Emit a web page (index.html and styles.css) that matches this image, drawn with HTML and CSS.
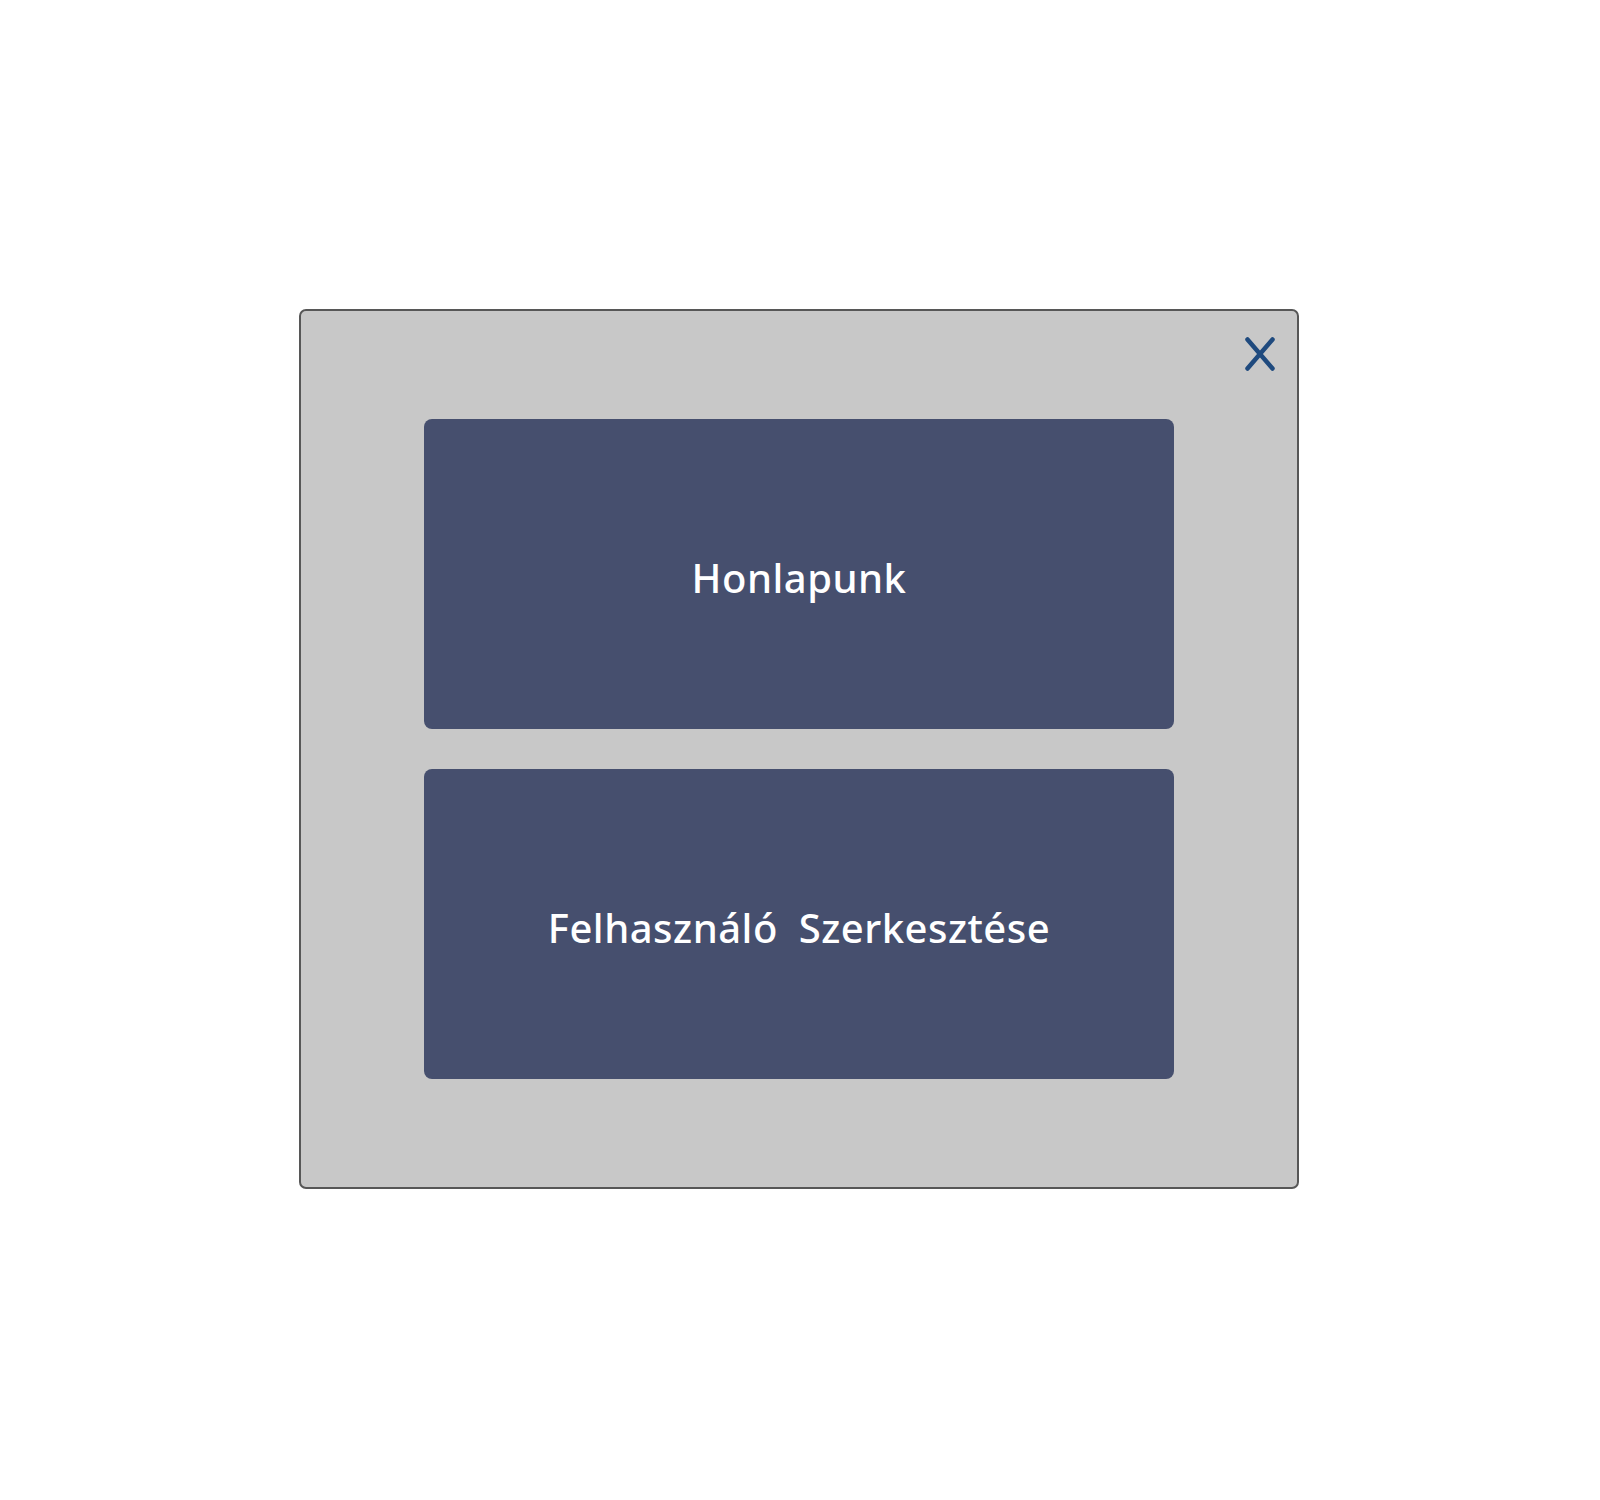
FILE: index.html
```html
<!DOCTYPE html>
<html>

<head>
    <meta charset="utf-8">
    <title>Menü</title>
    <link rel="stylesheet" href="styles.css">
</head>

<body>
    <div class="overlay">
        <div class="menu-modal">
            <button type="button" class="close-btn" aria-label="Bezárás">
                <svg width="30" height="34" viewBox="0 0 30 34">
                    <line x1="2.5" y1="2.5" x2="27.5" y2="31.5" />
                    <line x1="27.5" y1="2.5" x2="2.5" y2="31.5" />
                </svg>
            </button>
            <a class="menu-btn" href="#">Honlapunk</a>
            <a class="menu-btn" href="#">Felhasználó Szerkesztése</a>
        </div>
    </div>
</body>

</html>
```

FILE: styles.css
```css
body {
margin: 0;
background-color: #fff;
font-family: "Comic Sans MS", "Noto Sans", sans-serif;
}

.overlay {
min-height: 100vh;
display: flex;
align-items: center;
justify-content: center;
}

.menu-modal {
position: relative;
box-sizing: border-box;
width: 1000px;
padding: 108px 0;
margin: -2px 0 0 -2px;
display: flex;
flex-direction: column;
align-items: center;
gap: 40px;
background-color: #c8c8c8;
border: 2px solid #575757;
border-radius: 7px;
}

.close-btn {
position: absolute;
top: 26px;
right: 22px;
padding: 0;
border: none;
background: none;
cursor: pointer;
line-height: 0;
}

.close-btn line {
stroke: #1f4a7e;
stroke-width: 4.5;
stroke-linecap: round;
}

.menu-btn {
width: 750px;
height: 310px;
display: flex;
align-items: center;
justify-content: center;
padding-top: 6px;
box-sizing: border-box;
background-color: #464f6e;
border-radius: 8px;
color: #fff;
font-size: 40px;
font-weight: 500;
letter-spacing: 0.5px;
word-spacing: 10px;
text-decoration: none;
}
```
